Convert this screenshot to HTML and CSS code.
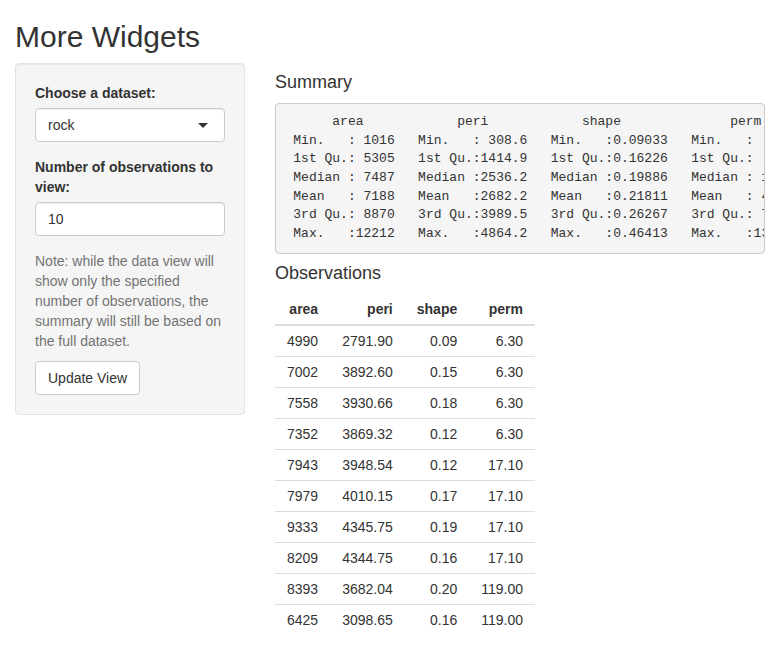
FILE: index.html
```
<!DOCTYPE html>
<html>
<head>
<meta charset="utf-8">
<title>More Widgets</title>
<link rel="stylesheet" href="styles.css">
</head>
<body>
<div class="container">
  <h2 class="title">More Widgets</h2>
  <div class="layout">
    <div class="sidebar">
      <div class="well">
        <div class="form-group">
          <label class="control-label">Choose a dataset:</label>
          <div class="select-input">
            <span>rock</span>
            <span class="caret"></span>
          </div>
        </div>
        <div class="form-group">
          <label class="control-label">Number of observations to view:</label>
          <div class="text-input">10</div>
        </div>
        <span class="help-block">Note: while the data view will show only the specified number of observations, the summary will still be based on the full dataset.</span>
        <button class="btn">Update View</button>
      </div>
    </div>
    <div class="main">
      <h4 class="section-title">Summary</h4>
      <pre class="summary">      area            peri            shape              perm        
 Min.   : 1016   Min.   : 308.6   Min.   :0.09033   Min.   :   6.30  
 1st Qu.: 5305   1st Qu.:1414.9   1st Qu.:0.16226   1st Qu.:  76.45  
 Median : 7487   Median :2536.2   Median :0.19886   Median : 130.50  
 Mean   : 7188   Mean   :2682.2   Mean   :0.21811   Mean   : 415.45  
 3rd Qu.: 8870   3rd Qu.:3989.5   3rd Qu.:0.26267   3rd Qu.: 777.50  
 Max.   :12212   Max.   :4864.2   Max.   :0.46413   Max.   :1300.00  </pre>
      <h4 class="section-title">Observations</h4>
      <table class="data-table">
        <thead>
          <tr><th>area</th><th>peri</th><th>shape</th><th>perm</th></tr>
        </thead>
        <tbody>
          <tr><td>4990</td><td>2791.90</td><td>0.09</td><td>6.30</td></tr>
          <tr><td>7002</td><td>3892.60</td><td>0.15</td><td>6.30</td></tr>
          <tr><td>7558</td><td>3930.66</td><td>0.18</td><td>6.30</td></tr>
          <tr><td>7352</td><td>3869.32</td><td>0.12</td><td>6.30</td></tr>
          <tr><td>7943</td><td>3948.54</td><td>0.12</td><td>17.10</td></tr>
          <tr><td>7979</td><td>4010.15</td><td>0.17</td><td>17.10</td></tr>
          <tr><td>9333</td><td>4345.75</td><td>0.19</td><td>17.10</td></tr>
          <tr><td>8209</td><td>4344.75</td><td>0.16</td><td>17.10</td></tr>
          <tr><td>8393</td><td>3682.04</td><td>0.20</td><td>119.00</td></tr>
          <tr><td>6425</td><td>3098.65</td><td>0.16</td><td>119.00</td></tr>
        </tbody>
      </table>
    </div>
  </div>
</div>
</body>
</html>
```
FILE: styles.css
```
* { box-sizing: border-box; }
html, body {
  margin: 0;
  padding: 0;
  background: #fff;
}
body {
  font-family: "Liberation Sans", Arial, sans-serif;
  font-size: 14px;
  line-height: 1.42857143;
  color: #333;
}
.container {
  padding: 0 15px;
}
.title {
  font-size: 30px;
  font-weight: 500;
  line-height: 1.1;
  margin: 20px 0 10px;
}
.layout {
  display: grid;
  grid-template-columns: 230px 490px;
  column-gap: 30px;
  align-items: start;
}
.well {
  background: #f5f5f5;
  border: 1px solid #e3e3e3;
  border-radius: 4px;
  box-shadow: inset 0 1px 1px rgba(0,0,0,0.05);
  padding: 19px;
}
.form-group {
  margin-bottom: 15px;
}
.control-label {
  display: block;
  font-weight: bold;
  margin-bottom: 5px;
}
.select-input, .text-input {
  height: 34px;
  padding: 6px 12px;
  background: #fff;
  border: 1px solid #ccc;
  border-radius: 4px;
  box-shadow: inset 0 1px 1px rgba(0,0,0,0.075);
  color: #333;
}
.select-input {
  display: flex;
  align-items: center;
  justify-content: space-between;
  padding-right: 16px;
}
.caret {
  width: 0;
  height: 0;
  border-style: solid;
  border-width: 5px 5px 0 5px;
  border-color: #333 transparent transparent transparent;
  margin-top: 1px;
}
.help-block {
  display: block;
  color: #737373;
  margin: 5px 0 10px;
}
.btn {
  font-family: inherit;
  font-size: 14px;
  line-height: 1.42857143;
  padding: 6px 12px;
  background: #fff;
  border: 1px solid #ccc;
  border-radius: 4px;
  color: #333;
  cursor: pointer;
}
.section-title {
  font-size: 18px;
  font-weight: 500;
  line-height: 1.1;
  margin: 10px 0 10px;
}
.summary {
  font-family: "Liberation Mono", "Courier New", monospace;
  font-size: 13px;
  line-height: 1.42857143;
  color: #333;
  background: #f5f5f5;
  border: 1px solid #ccc;
  border-radius: 4px;
  padding: 9.5px;
  margin: 0 0 10px;
  white-space: pre;
  overflow: hidden;
}
.data-table {
  border-collapse: collapse;
  border-spacing: 0;
  margin-bottom: 20px;
}
.data-table th, .data-table td {
  padding: 5px 12px;
  text-align: right;
  line-height: 1.42857143;
}
.data-table th {
  font-weight: bold;
  vertical-align: bottom;
  border-bottom: 2px solid #ddd;
}
.data-table td {
  border-top: 1px solid #ddd;
}
```
